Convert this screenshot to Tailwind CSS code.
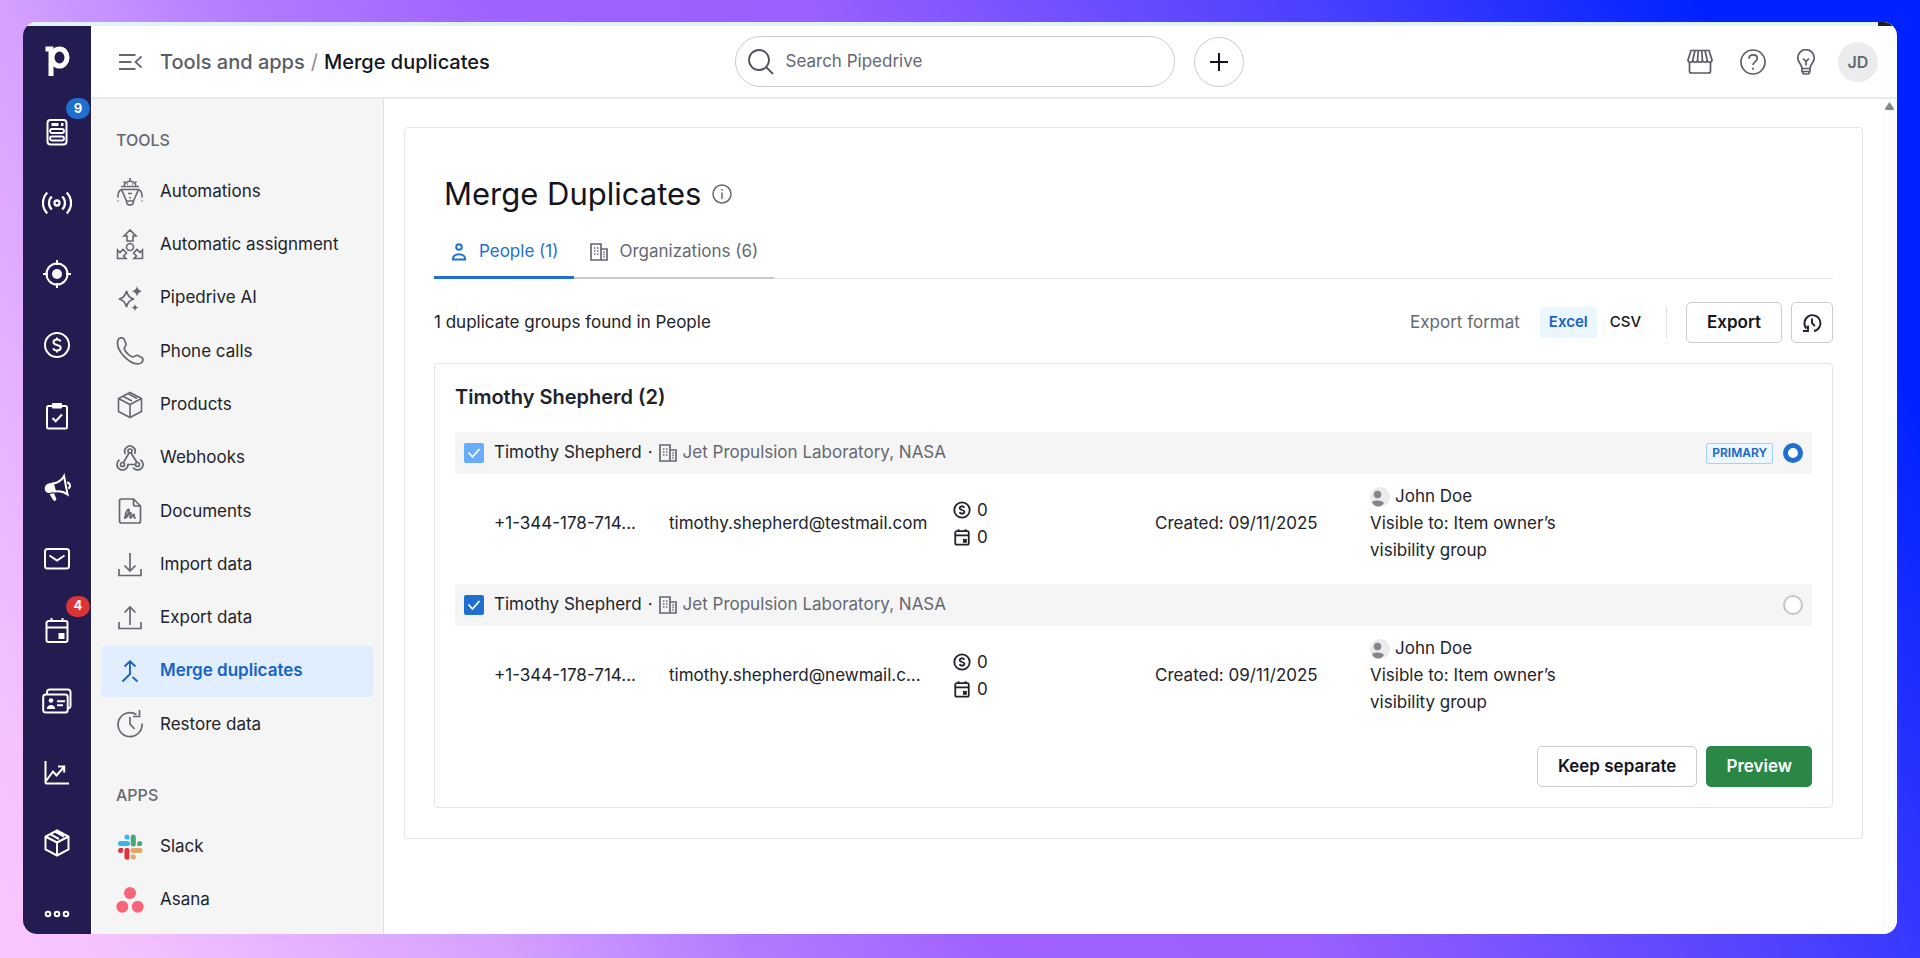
<!DOCTYPE html>
<html lang="en">
<head>
    <meta charset="UTF-8">
    <meta name="viewport" content="width=device-width, initial-scale=1.0">
    <title>Merge duplicates</title>
    <script src="https://cdn.jsdelivr.net/npm/@tailwindcss/browser@4"></script>
</head>
<body class="h-screen overflow-hidden bg-[linear-gradient(62deg,#f9c6ff_0%,#f5c2ff_5%,#d5a0ff_21%,#b27aff_31%,#9f62ff_41%,#9a60ff_54%,#4a40ff_75%,#0022ff_91%)] px-[23px] pt-[22px] pb-6 font-['Inter',sans-serif] text-[17px] text-[#21232c] antialiased">
    <!-- symbols shared by several places -->
    <svg class="hidden">
        <symbol id="cube" viewBox="0 0 28 28"><path d="M14 1.500 25.500 7.500v13L14 26.500 2.500 20.500v-13zM2.500 7.500 14 13.500l11.500-6M14 13.500v13M7 5.200 16 10M12 2.600 21 7.500"/></symbol>
        <symbol id="building" viewBox="0 0 18 18"><path d="M1 1h10v16H1zM11 6h6v11H1M4 5h1.500M7 5h1.500M4 8h1.500M7 8h1.500M4 11h1.500M7 11h1.500M13.300 9h1.500M13.300 11.500h1.500M13.300 14h1.500"/></symbol>
        <symbol id="deal" viewBox="0 0 28 28"><circle cx="14" cy="14" r="12"/><path d="M17.500 10.500C17 9 15.700 8.500 14 8.500c-2 0-3.500 1-3.500 2.700 0 3.800 7.200 1.800 7.200 5.600 0 1.700-1.600 2.700-3.700 2.700-1.900 0-3.300-.7-3.800-2.200M14 6.500v2M14 19.500v2"/></symbol>
        <symbol id="calendar" viewBox="0 0 28 28"><path d="M5.500 5h17a2 2 0 0 1 2 2v17a2 2 0 0 1-2 2h-17a2 2 0 0 1-2-2V7a2 2 0 0 1 2-2zM3.500 11.500h21M8.500 2v3M19.500 2v3"/><path d="M15.500 17h6v6h-6z" fill="currentColor" stroke="none"/></symbol>
        <symbol id="avatar" viewBox="0 0 20 20"><circle cx="10" cy="10" r="10" fill="#ececed"/><circle cx="7.500" cy="7.500" r="3.800" fill="#85868d"/><path d="M2 15.500c1.500-2.600 9.500-2.600 12 .5-2 4.500-9.500 5-12-.5z" fill="#85868d"/></symbol>
    </svg>

    <div class="relative flex h-full flex-col overflow-hidden rounded-[14px] bg-white">
        <div class="flex h-1 shrink-0 justify-end bg-[#e1f4f7]"><div class="w-[19px] bg-[#1f2026]"></div></div>
        <div class="flex min-h-0 flex-1">

            <!-- main navigation -->
            <nav class="flex w-[69px] shrink-0 flex-col items-center justify-between border-r border-white bg-[#221c50] pt-[21px] pb-[6px] text-white" aria-label="Main">
                <a href="#" aria-label="Home"><svg class="size-7 overflow-visible" viewBox="0 0 28 28" fill="none" stroke="currentColor" stroke-width="5"><path d="M2.500 2H8v27"/><ellipse cx="16.500" cy="10.500" rx="7.500" ry="8.500"/></svg></a>
                <a href="#" aria-label="Leads" class="relative">
                    <svg class="size-7" viewBox="0 0 28 28" fill="none" stroke="currentColor" stroke-width="2"><rect x="4.500" y="2" width="19" height="24.500" rx="3"/><path d="M8.500 6.500h7M18 6.500h2.500" stroke-width="3"/><path d="M9 11h10a1.500 1.500 0 0 1 0 4H9a1.500 1.500 0 0 1 0-4zM9 18.500h10a1.500 1.500 0 0 1 0 4H9a1.500 1.500 0 0 1 0-4z" stroke-width="1.800"/></svg>
                    <span class="absolute -top-5 left-[23px] flex h-[21px] w-6 items-center justify-center rounded-full bg-[#1f6fd0] text-[13px] font-bold">9</span>
                </a>
                <a href="#" aria-label="Pulse"><svg class="h-7 w-[30px]" viewBox="0 0 30 28" fill="none" stroke="currentColor" stroke-width="2.300"><circle cx="15" cy="14" r="2.500"/><path d="M9.800 7.500a9 9 0 0 0 0 13M20.200 7.500a9 9 0 0 1 0 13M5.200 3.500C-.5 10-.5 18 5.200 24.500M24.800 3.500c5.700 6.500 5.700 14.500 0 21"/></svg></a>
                <a href="#" aria-label="Prospects"><svg class="size-7" viewBox="0 0 28 28" fill="none" stroke="currentColor" stroke-width="2"><circle cx="14" cy="14" r="10.500"/><circle cx="14" cy="14" r="5" fill="currentColor" stroke="none"/><path d="M14 0v5M14 23v5M0 14h5M23 14h5"/></svg></a>
                <a href="#" aria-label="Deals"><svg class="size-7" fill="none" stroke="currentColor" stroke-width="2"><use href="#deal"/></svg></a>
                <a href="#" aria-label="Projects"><svg class="size-7" viewBox="0 0 28 28" fill="none" stroke="currentColor" stroke-width="2"><rect x="4" y="4" width="20" height="22.500" rx="1.500"/><path d="m9.500 16 3.200 3.200 6.300-6.700"/><rect x="9" y="1" width="10" height="5.500" rx="1" fill="currentColor" stroke="none"/></svg></a>
                <a href="#" aria-label="Campaigns"><svg class="size-7" viewBox="0 0 28 28" fill="none" stroke="currentColor" stroke-width="2"><path d="M10 10.500c4.500-.5 8.500-3 11-7.500l3.500 18.500c-4-3-8-3.800-12.500-3z"/><path d="M10.500 9.500 12 19l-6.500 1C.800 19.500.500 13 4.500 10.800zM6.500 21l4.500-.8 2.200 5.300a1.500 1.500 0 0 1-3.200 1.300z" fill="currentColor" stroke="none"/><path d="M24 9.500c3 0 4.200 4.500 1.300 6" /></svg></a>
                <a href="#" aria-label="Mail"><svg class="size-7" viewBox="0 0 28 28" fill="none" stroke="currentColor" stroke-width="2"><rect x="2" y="4" width="24" height="19.500" rx="2.500"/><path d="m6.500 10.500 7.500 5 7.500-5"/></svg></a>
                <a href="#" aria-label="Activities" class="relative">
                    <svg class="size-7" fill="none" stroke="currentColor" stroke-width="2"><use href="#calendar"/></svg>
                    <span class="absolute -top-5 left-[23px] flex h-[21px] w-6 items-center justify-center rounded-full bg-[#d93438] text-[13px] font-bold">4</span>
                </a>
                <a href="#" aria-label="Contacts"><svg class="h-7 w-[30px]" viewBox="0 0 30 28" fill="none" stroke="currentColor" stroke-width="2"><rect x="1.200" y="7.500" width="24.500" height="18" rx="2.500"/><path d="M5 7.500V5a2.500 2.500 0 0 1 2.500-2.500H26A2.500 2.500 0 0 1 28.500 5v14a2 2 0 0 1-2.500 2M15 14.200h8M15 18.200h6"/><circle cx="9" cy="13.500" r="2.300" fill="currentColor" stroke="none"/><path d="M4.800 22c0-5.500 8.400-5.500 8.400 0z" fill="currentColor" stroke="none"/></svg></a>
                <a href="#" aria-label="Insights"><svg class="size-7" viewBox="0 0 28 28" fill="none" stroke="currentColor" stroke-width="2"><path d="M2.500 3v21.500a1 1 0 0 0 1 1H26M3 23l7-9.500 3.500 4 7.500-8.500M15 8.500h6.200v6"/></svg></a>
                <a href="#" aria-label="Products"><svg class="size-7" fill="none" stroke="currentColor" stroke-width="2"><use href="#cube"/></svg></a>
                <a href="#" aria-label="More"><svg class="size-7" viewBox="0 0 28 28" fill="none" stroke="currentColor" stroke-width="2"><circle cx="5" cy="14" r="2.300"/><circle cx="14" cy="14" r="2.300"/><circle cx="23" cy="14" r="2.300"/></svg></a>
            </nav>

            <div class="flex min-w-0 flex-1 flex-col">
                <header class="flex h-[73px] shrink-0 items-center border-b-2 border-[#e9e9ea] pr-[19px] pl-[26px]">
                    <div class="flex flex-1 items-center">
                        <button class="text-[#656872]" aria-label="Collapse menu"><svg class="size-6" viewBox="0 0 24 24" fill="none" stroke="currentColor" stroke-width="1.800"><path d="M1 5h16.500M1 12h12.500M1 19h16.500M23.500 6.500 17.500 12l6 5.500"/></svg></button>
                        <div class="ml-[18px] flex gap-[6px] text-[20px] font-medium whitespace-nowrap">
                            <a href="#" class="text-[#5b5d66]">Tools and apps</a>
                            <span class="font-normal text-[#8b8d94]">/</span>
                            <span class="text-[#14151c]">Merge duplicates</span>
                        </div>
                    </div>
                    <div class="mr-[18px] flex items-center gap-[19px]">
                        <label class="flex h-[51px] w-[440px] items-center gap-3 rounded-full border border-[#cbcbcd] pl-3">
                            <svg class="size-[26px] text-[#50525c]" viewBox="0 0 26 26" fill="none" stroke="currentColor" stroke-width="1.800"><circle cx="11" cy="11" r="10"/><path d="m18 18 7 7"/></svg>
                            <input type="search" aria-label="Search Pipedrive" placeholder="Search Pipedrive" class="w-80 outline-none placeholder:text-[#656872]">
                        </label>
                        <button class="flex size-[50px] items-center justify-center rounded-full border border-[#cbcbcd]" aria-label="Quick add"><svg class="size-[18px]" viewBox="0 0 18 18" stroke="#14151c" stroke-width="2"><path d="M9 0v18M0 9h18"/></svg></button>
                    </div>
                    <div class="flex flex-1 items-center justify-end gap-[27px] text-[#5b5d66]">
                        <button aria-label="Marketplace"><svg class="size-[26px]" viewBox="0 0 26 26" fill="none" stroke="currentColor" stroke-width="1.700"><path d="M4 1.500h18l3 9.500c0 3-4.500 3-4.800 0 0 3-4.800 3-4.800 0 0 3-4.800 3-4.800 0 0 3-4.800 3-4.800 0-.3 3-4.800 3-4.800 0zM8 1.500 5.800 11M11.300 1.500l-.7 9.500M14.700 1.500l.7 9.500M18 1.500l2.200 9.500M2.500 13.500V22a2 2 0 0 0 2 2h17a2 2 0 0 0 2-2v-8.500"/></svg></button>
                        <button aria-label="Help"><svg class="size-[26px]" viewBox="0 0 26 26" fill="none" stroke="currentColor" stroke-width="1.700"><circle cx="13" cy="13" r="12"/><path d="M9 9.800c0-5.300 8.300-5 8.300-.3 0 3-4.300 3.300-4.300 6.500M13 18.800v2"/></svg></button>
                        <button aria-label="Tips"><svg class="size-[26px]" viewBox="0 0 26 26" fill="none" stroke="currentColor" stroke-width="1.700"><path d="M9 19.500c0-4-4.300-6-4.300-10.500a8.300 8.300 0 0 1 16.600 0c0 4.500-4.300 6.500-4.300 10.500zM9 19.500v3l1.500 2.500h5L17 22.500v-3M9 22.500h8M10 9.500l3 3 3-3M13 12.500v4"/></svg></button>
                        <button class="-ml-2 flex size-10 items-center justify-center rounded-full bg-[#ebeced] text-[16px] font-semibold text-[#656872]">JD</button>
                    </div>
                </header>

                <div class="flex min-h-0 flex-1">
                    <!-- tools and apps menu -->
                    <aside class="w-[292px] shrink-0 border-r border-[#dfdfe1] bg-[#f5f5f5] px-[9px] pt-[29px] text-[#21232c]">
                        <h2 class="pl-[15px] text-[16px] leading-6 font-medium text-[#656872]">TOOLS</h2>
                        <ul class="mt-[14px] flex h-[584px] flex-col justify-between">
                            <li><a href="#" class="flex h-[51px] items-center gap-4 pl-[15px]"><svg class="size-7 text-[#656872]" viewBox="0 0 28 28" fill="none" stroke="currentColor" stroke-width="1.600"><path d="M14 0v3M8 8.500C8.500 1.500 19.500 1.500 20 8.500zM5 8.500h18M9 5 7.500 3.500M19 5l1.500-1.500M5.500 11.500h17L17.500 23h-7zM10.500 23c0 5.500 7 5.500 7 0M12 15.500h4M14 19v1.500M5 12c-2.500 1-3.200 4-3 7.500M23 12c2.500 1 3.200 4 3 7.500M2 22.500v1M26 22.500v1M11 6h1M16 6h1"/></svg>Automations</a></li>
                            <li><a href="#" class="flex h-[51px] items-center gap-4 pl-[15px]"><svg class="size-7 overflow-visible text-[#656872]" viewBox="0 0 28 28" fill="none" stroke="currentColor" stroke-width="1.600"><circle cx="14" cy="16" r="3.500"/><path d="M14-1 8 5h3v5h6V5h3zM1.500 19v8.500H10l-2.500-2.500 3-3-3.500-3.500-3 3zM26.500 19v8.500H18l2.500-2.500-3-3 3.500-3.500 3 3z"/></svg>Automatic assignment</a></li>
                            <li><a href="#" class="flex h-[51px] items-center gap-4 pl-[15px]"><svg class="size-7 text-[#656872]" viewBox="0 0 28 28" fill="none" stroke="currentColor" stroke-width="1.700"><path d="M10.500 7c1 5 3 7 7.500 8-4.500 1-6.500 3-7.500 8-1-5-3-7-7.500-8 4.500-1 6.500-3 7.500-8z"/><path d="M21 2c.7 3.300 2 4.500 5 5.300-3 .7-4.300 2-5 5.200-.7-3.200-2-4.500-5-5.200 3-.8 4.300-2 5-5.300zM19 20c.5 2.200 1.400 3 3.500 3.500-2.100.5-3 1.400-3.500 3.500-.5-2.100-1.400-3-3.500-3.500 2.100-.5 3-1.300 3.500-3.500z" fill="currentColor" stroke="none"/></svg>Pipedrive AI</a></li>
                            <li><a href="#" class="flex h-[51px] items-center gap-4 pl-[15px]"><svg class="size-7 text-[#656872]" viewBox="0 0 28 28" fill="none" stroke="currentColor" stroke-width="1.700"><path d="M2 3C3 .500 7 .200 8 2l2 5c.5 1.500-1.800 3-1.800 4.500 1 3.500 5 7.300 8.300 8.500 1.500.300 3.500-2.200 5-1.700l4.500 2.500c2 1.200.500 5-2 5.700C14 29-1 13 2 3z"/></svg>Phone calls</a></li>
                            <li><a href="#" class="flex h-[51px] items-center gap-4 pl-[15px]"><svg class="size-7 text-[#656872]" fill="none" stroke="currentColor" stroke-width="1.600"><use href="#cube"/></svg>Products</a></li>
                            <li><a href="#" class="flex h-[51px] items-center gap-4 pl-[15px]"><svg class="size-7 text-[#656872]" viewBox="0 0 28 28" fill="none" stroke="currentColor" stroke-width="1.700"><circle cx="14" cy="7" r="2"/><circle cx="6.500" cy="20.500" r="2"/><circle cx="21.500" cy="20.500" r="2"/><path d="M9.500 10a5.200 5.200 0 1 1 9-.2M13 9 7.500 18.500M15 9l6 9.500M3.500 15.800a5.500 5.500 0 1 0 8.500 4.700h7.500M24.500 15.800a5.500 5.500 0 1 1-7.500 7.700"/></svg>Webhooks</a></li>
                            <li><a href="#" class="flex h-[51px] items-center gap-4 pl-[15px]"><svg class="size-7 text-[#656872]" viewBox="0 0 28 28" fill="none" stroke="currentColor" stroke-width="1.700"><path d="M5.500 2h12l7 7v15a2 2 0 0 1-2 2h-17a2 2 0 0 1-2-2V4a2 2 0 0 1 2-2zM17.500 2v5a2 2 0 0 0 2 2h5M8 21.500c4-3 5.500-7 5-9-1.500-1-4.500 5-3.500 8.500 2 0 3.500-6 5.500-5 .5 1.500-2 4.500-.5 5 1.500 0 2-4 3.500-3.500.5 2-1 3.500 2 3.500"/></svg>Documents</a></li>
                            <li><a href="#" class="flex h-[51px] items-center gap-4 pl-[15px]"><svg class="size-7 text-[#656872]" viewBox="0 0 28 28" fill="none" stroke="currentColor" stroke-width="1.700"><path d="M14 2v18M8.500 14.500 14 20l5.500-5.500M3 18v6.500h22V18"/></svg>Import data</a></li>
                            <li><a href="#" class="flex h-[51px] items-center gap-4 pl-[15px]"><svg class="size-7 text-[#656872]" viewBox="0 0 28 28" fill="none" stroke="currentColor" stroke-width="1.700"><path d="M14 21V3M8.500 8.500 14 3l5.500 5.500M3 18v6.500h22V18"/></svg>Export data</a></li>
                            <li><a href="#" aria-current="page" class="flex h-[51px] items-center gap-4 rounded-[4px] bg-[#e1eeff] pl-[15px] font-semibold text-[#1763c6]"><svg class="size-7" viewBox="0 0 28 28" fill="none" stroke="currentColor" stroke-width="1.900"><path d="M6.500 24.500 14 17V5M8.500 9.500 14 4.200l5.500 5.300M16.500 20l5 4.500"/></svg>Merge duplicates</a></li>
                            <li><a href="#" class="flex h-[51px] items-center gap-4 pl-[15px]"><svg class="size-7 text-[#656872]" viewBox="0 0 28 28" fill="none" stroke="currentColor" stroke-width="1.700"><path d="M26 13.500A12 12 0 1 1 20.500 4.500M23.500 0v6.500H17M14 7v7l4.500 5"/></svg>Restore data</a></li>
                        </ul>
                        <h2 class="mt-[33px] pl-[15px] text-[16px] leading-6 font-medium text-[#656872]">APPS</h2>
                        <ul class="mt-[14px] flex flex-col gap-[2px]">
                            <li><a href="#" class="flex h-[51px] items-center gap-4 pl-[15px]"><svg class="size-7" viewBox="0 0 28 28"><g fill="#36b5ee"><rect x="2" y="8" width="12" height="5" rx="2.500"/><path d="M13.500 6.500V4A2.500 2.500 0 1 0 11 6.500z"/></g><g fill="#45a977"><rect x="14.800" y="1.500" width="5" height="12" rx="2.500"/><path d="M21.300 13h2.500a2.500 2.500 0 1 0-2.500-2.500z"/></g><g fill="#e0a768"><rect x="14.500" y="15" width="12" height="5" rx="2.500"/><path d="M14.800 21.500V24a2.500 2.500 0 1 0 2.500-2.500z"/></g><g fill="#de3540"><rect x="8.500" y="14.800" width="5" height="12" rx="2.500"/><path d="M7 15H4.500A2.500 2.500 0 1 0 7 17.500z"/></g></svg>Slack</a></li>
                            <li><a href="#" class="flex h-[51px] items-center gap-4 pl-[15px]"><svg class="size-7" viewBox="0 0 28 28" fill="#f8657b"><circle cx="14" cy="7" r="6"/><circle cx="6.300" cy="20.700" r="6"/><circle cx="21.700" cy="20.700" r="6"/></svg>Asana</a></li>
                        </ul>
                    </aside>

                    <main class="min-w-0 flex-1 bg-white pt-[28px] pr-[18px] pl-5">
                        <section class="rounded-[4px] border border-[#e4e4e5] px-[29px] pt-[45px] pb-[30px]">
                            <div class="flex items-center gap-[11px] pl-[10px]">
                                <h1 class="text-[31px] leading-[42px] text-[#14151c]">Merge Duplicates</h1>
                                <svg class="size-5 text-[#656872]" viewBox="0 0 20 20" fill="none" stroke="currentColor" stroke-width="1.500"><circle cx="10" cy="10" r="9"/><path d="M10 8.500V15M10 5v1.500"/></svg>
                            </div>
                            <div class="mt-[12px] flex h-[52px] items-stretch shadow-[inset_0_-1px_#e4e4e5]" role="tablist">
                                <button role="tab" aria-selected="true" class="flex items-center gap-[11px] border-b-[3px] border-[#1f6fd6] px-4 text-[#1f6fd6]"><svg class="size-[18px]" viewBox="0 0 18 18" fill="none" stroke="currentColor" stroke-width="2"><circle cx="9" cy="4" r="2.800"/><path d="M3 16.500c-1-7 13-7 12 0z"/></svg>People (1)</button>
                                <button role="tab" aria-selected="false" class="flex items-center gap-[11px] border-b-2 border-[#c9c9cb] px-4 text-[#656872]"><svg class="size-[18px]" fill="none" stroke="currentColor" stroke-width="1.700"><use href="#building"/></svg>Organizations (6)</button>
                            </div>
                            <div class="mt-[23px] flex items-center justify-between">
                                <p>1 duplicate groups found in People</p>
                                <div class="flex items-center">
                                    <span class="text-[#656872]">Export format</span>
                                    <button class="ml-5 h-[31px] rounded-[4px] bg-[#ebf6ff] px-[9px] text-[15px] font-semibold text-[#1763c6]">Excel</button>
                                    <button class="ml-[4px] h-[31px] px-[9px] text-[15px] font-medium text-[#14151c]">CSV</button>
                                    <div class="mx-[16px] h-[31px] w-px bg-[#dfdfe1]"></div>
                                    <button class="ml-[3px] h-[41px] rounded-[5px] border border-[#cbcbcd] px-5 font-semibold text-[#14151c]">Export</button>
                                    <button class="ml-[9px] flex h-[41px] w-[42px] items-center justify-center rounded-[5px] border border-[#cbcbcd]" aria-label="Export history"><svg class="size-[18px] overflow-visible" viewBox="0 0 18 18" fill="none" stroke="#21232c" stroke-width="1.900"><path d="M3.500 14.500A8 8 0 1 1 11 17M5 11.500v5.500H0M9 4.500V9l2.800 3.200"/></svg></button>
                                </div>
                            </div>

                            <div class="mt-5 rounded-[4px] border border-[#e4e4e5] p-5">
                                <h2 class="mb-[21px] text-[20px] leading-[27px] font-semibold">Timothy Shepherd (2)</h2>
                                <div class="flex h-[42px] items-center rounded-[2px] bg-[#f5f5f5] px-[9px]">
                                    <label class="flex items-center gap-[10px]">
                                        <span class="relative flex">
                                            <input type="checkbox" checked disabled class="size-5 appearance-none rounded-[2px] bg-[#68acfb]">
                                            <svg class="absolute inset-0 size-5" viewBox="0 0 20 20" fill="none" stroke="white" stroke-width="1.800"><path d="m4.500 9.500 4 4.500 7-8"/></svg>
                                        </span>
                                        Timothy Shepherd
                                    </label>
                                    <span class="mx-[6px]">·</span>
                                    <svg class="size-[18px] text-[#656872]" fill="none" stroke="currentColor" stroke-width="1.700"><use href="#building"/></svg>
                                    <a href="#" class="ml-[6px] text-[#656872]">Jet Propulsion Laboratory, NASA</a>
                                    <span class="ml-auto flex h-[21px] items-center rounded-[2px] border border-[#a9cffb] bg-[#ebf6ff] px-[5px] text-[12px] font-semibold text-[#1763c6]">PRIMARY</span>
                                    <input type="radio" name="primary" checked aria-label="First record is primary" class="ml-[10px] size-5 appearance-none rounded-full border-[5px] border-[#1f6fd0] bg-white">
                                </div>
                                <div class="grid grid-cols-[175fr_284fr_202fr_215fr_442fr] items-center pt-[9px] pb-5 pl-[39px] leading-[27px]">
                                    <div class="truncate">+1-344-178-714...</div>
                                    <div class="truncate">timothy.shepherd@testmail.com</div>
                                    <div>
                                        <div class="flex items-center gap-[6px]"><svg class="size-[18px]" fill="none" stroke="currentColor" stroke-width="2.800"><use href="#deal"/></svg>0</div>
                                        <div class="flex items-center gap-[6px]"><svg class="size-[18px]" fill="none" stroke="currentColor" stroke-width="2.800"><use href="#calendar"/></svg>0</div>
                                    </div>
                                    <div class="truncate">Created: 09/11/2025</div>
                                    <div class="max-w-[200px]">
                                        <div class="flex items-center gap-[5px]"><svg class="size-5"><use href="#avatar"/></svg>John Doe</div>
                                        Visible to: Item owner’s visibility group
                                    </div>
                                </div>
                                <div class="flex h-[42px] items-center rounded-[2px] bg-[#f5f5f5] px-[9px]">
                                    <label class="flex items-center gap-[10px]">
                                        <span class="relative flex">
                                            <input type="checkbox" checked class="size-5 appearance-none rounded-[2px] bg-[#1f6fd0]">
                                            <svg class="pointer-events-none absolute inset-0 size-5" viewBox="0 0 20 20" fill="none" stroke="white" stroke-width="1.800"><path d="m4.500 9.500 4 4.500 7-8"/></svg>
                                        </span>
                                        Timothy Shepherd
                                    </label>
                                    <span class="mx-[6px]">·</span>
                                    <svg class="size-[18px] text-[#656872]" fill="none" stroke="currentColor" stroke-width="1.700"><use href="#building"/></svg>
                                    <a href="#" class="ml-[6px] text-[#656872]">Jet Propulsion Laboratory, NASA</a>
                                    <input type="radio" name="primary" aria-label="Second record is primary" class="ml-auto size-5 appearance-none rounded-full border-2 border-[#c6c6c9] bg-white">
                                </div>
                                <div class="grid grid-cols-[175fr_284fr_202fr_215fr_442fr] items-center pt-[9px] pb-5 pl-[39px] leading-[27px]">
                                    <div class="truncate">+1-344-178-714...</div>
                                    <div class="truncate">timothy.shepherd@newmail.c...</div>
                                    <div>
                                        <div class="flex items-center gap-[6px]"><svg class="size-[18px]" fill="none" stroke="currentColor" stroke-width="2.800"><use href="#deal"/></svg>0</div>
                                        <div class="flex items-center gap-[6px]"><svg class="size-[18px]" fill="none" stroke="currentColor" stroke-width="2.800"><use href="#calendar"/></svg>0</div>
                                    </div>
                                    <div class="truncate">Created: 09/11/2025</div>
                                    <div class="max-w-[200px]">
                                        <div class="flex items-center gap-[5px]"><svg class="size-5"><use href="#avatar"/></svg>John Doe</div>
                                        Visible to: Item owner’s visibility group
                                    </div>
                                </div>
                                <div class="mt-[10px] flex justify-end gap-[9px]">
                                    <button class="h-[41px] rounded-[5px] border border-[#cbcbcd] px-5 font-semibold text-[#14151c]">Keep separate</button>
                                    <button class="h-[41px] rounded-[5px] bg-[#2b8745] px-5 font-semibold text-white">Preview</button>
                                </div>
                            </div>
                        </section>
                    </main>
                    <!-- scrollbar track -->
                    <div class="flex w-4 shrink-0 justify-center bg-[#fcfdfd] pt-[3px]"><svg class="h-[8px] w-[9px]" viewBox="0 0 9 8"><path d="M4.500 0 9 6.500 8.500 8h-8L0 6.500z" fill="#85868d"/></svg></div>
                </div>
            </div>
        </div>
    </div>
</body>
</html>
